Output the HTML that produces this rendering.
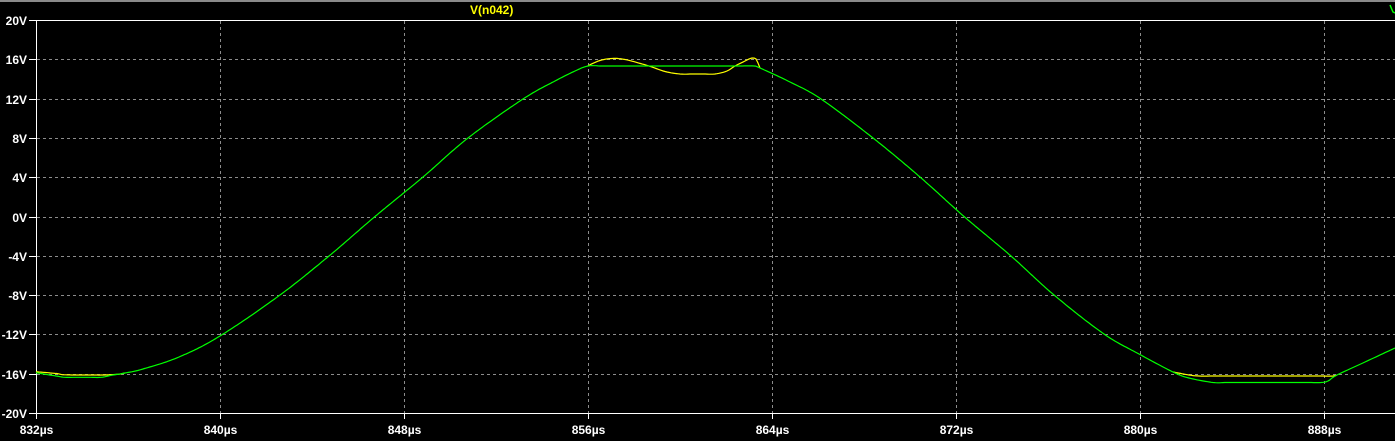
<!DOCTYPE html>
<html><head><style>
html,body{margin:0;padding:0;background:#000;width:1395px;height:441px;overflow:hidden}
svg{display:block}
text{font-family:"Liberation Sans",sans-serif;font-weight:bold;font-size:12px;fill:#fff}
</style></head><body>
<svg id="s" width="1395" height="441" xmlns="http://www.w3.org/2000/svg">
<rect x="0" y="0" width="1395" height="2" fill="#8a8a8a"/>
<g id="grid" stroke="#8c8c8c" stroke-width="1" stroke-dasharray="3,3" fill="none"></g>
<g id="axes" stroke="#fff" stroke-width="1" fill="none">
<line x1="36.5" y1="20" x2="36.5" y2="418"/>
<line x1="36" y1="20.5" x2="1395" y2="20.5"/>
<line x1="36" y1="413.5" x2="1395" y2="413.5"/>
</g>
<g id="lbl"></g>
<text x="470" y="14" style="fill:#ffff00">V(n042)</text>
<g id="yl"></g>
<polyline id="g" fill="none" stroke="#00ff00" stroke-width="1.2"/>
<polyline points="1390,5 1393,12 1395,13" fill="none" stroke="#00ff00" stroke-width="1.5"/>
</svg>
<script>
var NS="http://www.w3.org/2000/svg";
function el(p,t,a,txt){var e=document.createElementNS(NS,t);for(var k in a)e.setAttribute(k,a[k]);if(txt)e.textContent=txt;p.appendChild(e);return e;}
var grid=document.getElementById('grid'),axes=document.getElementById('axes'),lbl=document.getElementById('lbl');
function vy(v){return 216.5-v*9.825;}
for(var v=20;v>=-20;v-=4){var y=Math.round(vy(v))+0.5;
 if(v<20&&v>-20)el(grid,'line',{x1:37,y1:y,x2:1395,y2:y});
 el(axes,'line',{x1:29,y1:y,x2:36,y2:y});
 el(lbl,'text',{x:27,y:y+4.5,'text-anchor':'end'},v+'V');}
for(var i=0;i<8;i++){var x=36+i*184+0.5;
 if(i>0)el(grid,'line',{x1:x,y1:21,x2:x,y2:413});
 el(axes,'line',{x1:x,y1:413,x2:x,y2:419});
 el(lbl,'text',{x:x,y:434,'text-anchor':'middle'},(832+i*8)+'\u00b5s');}
var G=[[36,372.7],[56,376],[65,377.3],[101,377.3],[112,375.2],[125,373],[143,369],[179,357],[220,336],[280,295],[329,256],[375,216.5],[423,177],[468,138],[523,99],[555,81],[575,71],[588,66],[754,66],[760,68],[790,82],[821,99],[873,138],[920,177],[964,216.5],[1011,256],[1054,295],[1104,334],[1139,354],[1173,372],[1189,378],[1213,382.5],[1321,382.5],[1328,381],[1337,375],[1365,362],[1395,348]];
var S1=[[36,371.7],[58,373.7],[62,374.7],[76,375],[103,375],[118,374.3],[125,373]];
var S2=[[588,65.7],[600,60.5],[612,58.5],[625,59.5],[648,65.7],[665,71.5],[680,74],[715,74],[727,71],[735,66],[745,61],[752,58],[756,59],[758,63],[760,68]];
var S3=[[1173,372],[1189,375],[1199,376],[1333,376],[1337,375]];
function dens(P){var o=[P[0]];for(var i=1;i<P.length;i++){var a=P[i-1],b=P[i],d=b[0]-a[0];
 if(d>25&&Math.abs(b[1]-a[1])<1){var n=Math.ceil(d/15);for(var k=1;k<n;k++)o.push([a[0]+d*k/n,a[1]+(b[1]-a[1])*k/n]);}
 o.push(b);}return o;}
function cr(P){P=dens(P);var out=[];for(var i=0;i<P.length-1;i++){var p0=P[Math.max(0,i-1)],p1=P[i],p2=P[i+1],p3=P[Math.min(P.length-1,i+2)];
 var n=Math.max(1,Math.round((p2[0]-p1[0])/2));
 for(var k=0;k<n;k++){var t=k/n,t2=t*t,t3=t2*t;
  var f=function(a,b,c,d){return 0.5*((2*b)+(-a+c)*t+(2*a-5*b+4*c-d)*t2+(-a+3*b-3*c+d)*t3);};
  out.push(f(p0[0],p1[0],p2[0],p3[0]).toFixed(1)+','+f(p0[1],p1[1],p2[1],p3[1]).toFixed(1));}}
 var l=P[P.length-1];out.push(l[0]+','+l[1]);return out.join(' ');}
document.getElementById('g').setAttribute('points',cr(G));
var yl=document.getElementById('yl');
[S1,S2,S3].forEach(function(s){el(yl,'polyline',{points:cr(s),fill:'none',stroke:'#ffff00','stroke-width':1.2});});
</script>
</body></html>
